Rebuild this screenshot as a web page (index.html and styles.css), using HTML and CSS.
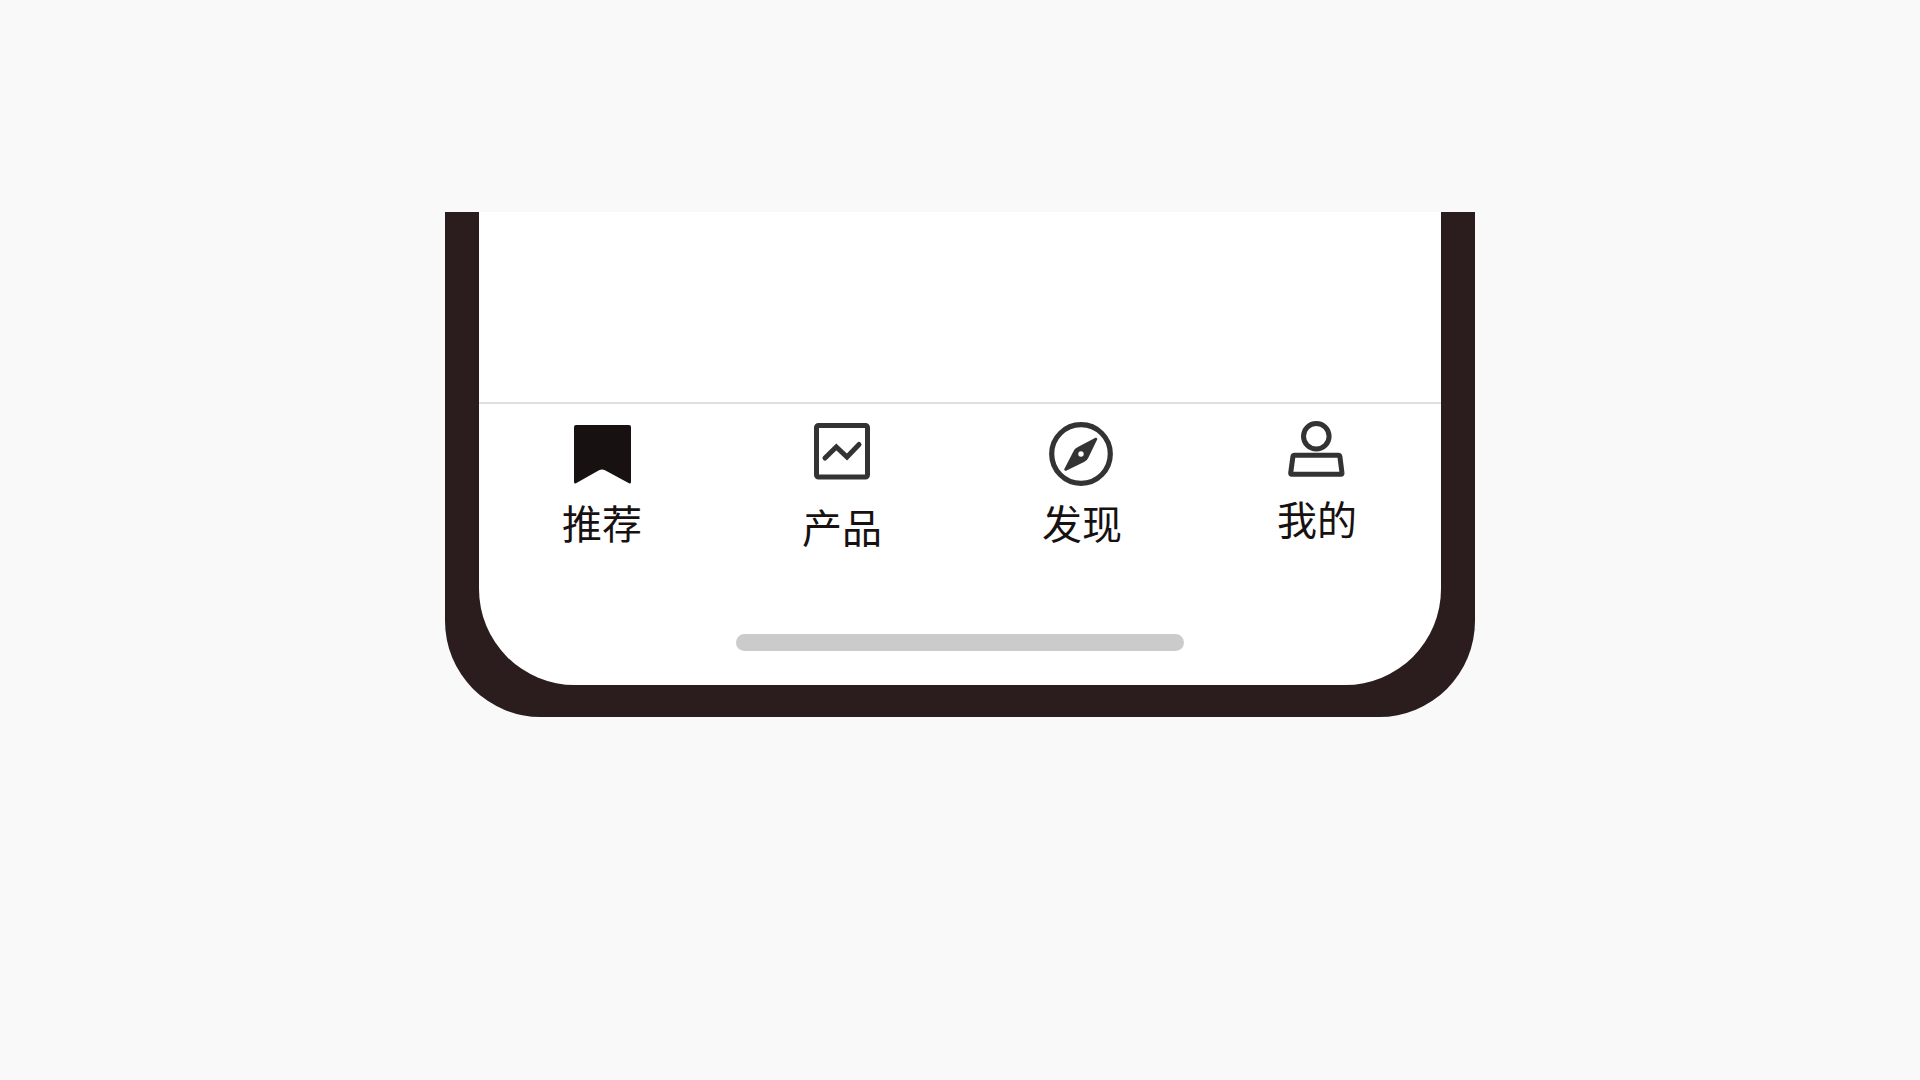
FILE: index.html
```html
<!DOCTYPE html>
<html lang="zh-CN">
<head>
<meta charset="utf-8">
<meta name="viewport" content="width=device-width, initial-scale=1">
<title>推荐</title>
<link rel="stylesheet" href="styles.css">
</head>
<body>
<div class="phone">
  <div class="screen">
    <main class="content"></main>
    <nav class="tabs">
      <a class="tab tab-active" href="#recommend" aria-current="page">
        <svg class="icon" viewBox="0 0 64 64" aria-hidden="true"><path fill="currentColor" d="M6 5H59Q61 5 61 7V62Q61 64 59 63.200L35 50.200Q32 48.600 29 50.200L6 63.200Q4 64 4 62V7Q4 5 6 5Z"/></svg>
        <span>推荐</span>
      </a>
      <a class="tab tab-roomy" href="#products">
        <svg class="icon" viewBox="0 0 64 64" aria-hidden="true"><g fill="none" stroke="currentColor" stroke-width="5" stroke-linejoin="round"><rect x="6.500" y="5.500" width="51" height="51.500" rx="2"/><path stroke-linecap="round" stroke-linejoin="miter" d="M15 38L26.300 27L37 37L49 24.500"/></g></svg>
        <span>产品</span>
      </a>
      <a class="tab" href="#discover">
        <svg class="icon" viewBox="0 0 64 64" aria-hidden="true"><circle cx="31" cy="34" r="29.300" fill="none" stroke="currentColor" stroke-width="5.200"/><path fill="currentColor" fill-rule="evenodd" stroke="currentColor" stroke-width="2.600" stroke-linejoin="round" d="M46 19L37.500 36.500Q36.500 39 34 40.500L15.500 49.500L24.500 32Q25.500 29.500 28 28.300ZM31 30A4 4 0 1 0 31 38A4 4 0 1 0 31 30Z"/></svg>
        <span>发现</span>
      </a>
      <a class="tab tab-snug" href="#me">
        <svg class="icon" viewBox="0 0 64 64" aria-hidden="true"><g fill="none" stroke="currentColor" stroke-width="5" stroke-linejoin="round"><circle cx="31.300" cy="16.200" r="12.800"/><path d="M9.500 35.200H53.300Q54.700 35.200 54.900 36.700L57 53Q57.200 54.300 56 54.300H6.700Q5.500 54.300 5.700 53L7.900 36.700Q8.100 35.200 9.500 35.200Z"/></g></svg>
        <span>我的</span>
      </a>
    </nav>
    <div class="home-bar"></div>
  </div>
</div>
</body>
</html>
```
FILE: styles.css
```css
* {
  box-sizing: border-box;
}

body {
  margin: 0;
  min-height: 100vh;
  padding: 212px 24px 24px;
  background: #f9f9f9;
  font-family: "Noto Sans CJK SC", sans-serif;
}

.phone {
  max-width: 1030px;
  margin: 0 auto;
  padding: 0 34px 32px;
  border-radius: 0 0 96px 96px;
  background: #2b1d1e;
}

.screen {
  padding-bottom: 34px;
  border-radius: 0 0 96px 96px;
  background: #fff;
}

.content {
  min-height: 190px;
}

.tabs {
  display: grid;
  grid-template-columns: 24fr 24fr 24fr 23fr;
  padding: 16px 9px 0 3px;
  border-top: 2px solid #dfdfdf;
}

.tab {
  display: flex;
  flex-direction: column;
  align-items: center;
  gap: 14px;
  color: #181112;
  font-size: 40px;
  line-height: 48px;
  text-decoration: none;
}

.tab-roomy {
  gap: 18px;
}

.tab-snug {
  gap: 10px;
}

.icon {
  width: 64px;
  height: 64px;
  overflow: visible;
  color: #333;
}

.tab-active .icon {
  color: #181112;
}

.home-bar {
  width: 448px;
  max-width: 60%;
  height: 17px;
  margin: 84px auto 0;
  border-radius: 9px;
  background: #cbcbcb;
}
```
